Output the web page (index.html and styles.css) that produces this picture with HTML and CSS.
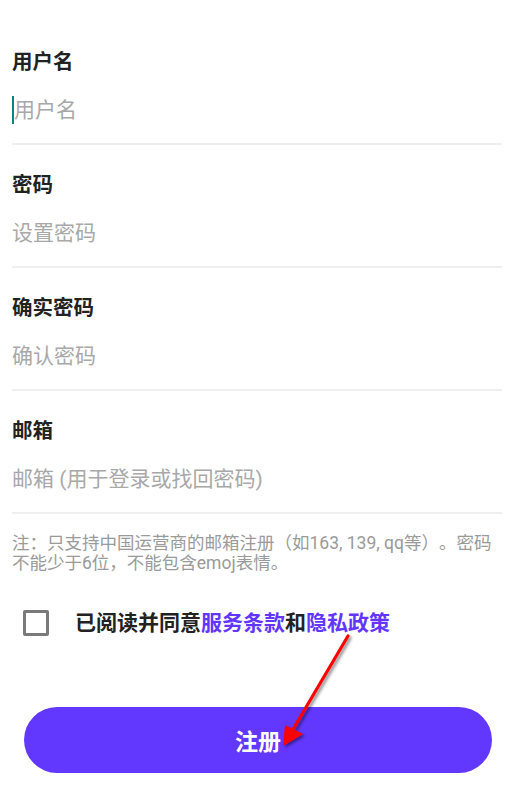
FILE: index.html
```html
<!DOCTYPE html>
<html lang="zh-CN">
<head>
    <meta charset="UTF-8">
    <meta name="viewport" content="width=device-width, initial-scale=1.0">
    <title>注册</title>
    <link rel="stylesheet" href="styles.css">
</head>
<body>
    <div class="page">
        <div class="form">
            <div class="field">
                <label class="field-label">用户名</label>
                <div class="field-input"><span class="cursor"></span><span class="placeholder">用户名</span></div>
            </div>
            <div class="field">
                <label class="field-label">密码</label>
                <div class="field-input"><span class="placeholder">设置密码</span></div>
            </div>
            <div class="field">
                <label class="field-label">确实密码</label>
                <div class="field-input"><span class="placeholder">确认密码</span></div>
            </div>
            <div class="field">
                <label class="field-label">邮箱</label>
                <div class="field-input"><span class="placeholder">邮箱 (用于登录或找回密码)</span></div>
            </div>
        </div>

        <p class="note">注：只支持中国运营商的邮箱注册（如163, 139, qq等）。密码不能少于6位，不能包含emoj表情。</p>

        <div class="agree">
            <span class="checkbox"></span>
            <span class="agree-text">已阅读并同意<a class="link">服务条款</a>和<a class="link">隐私政策</a></span>
        </div>

        <button class="submit">注册</button>
    </div>

    <!-- annotation arrow drawn over the screenshot -->
    <svg class="arrow" width="514" height="792" viewBox="0 0 514 792">
        <defs>
            <filter id="shadow" x="-20%" y="-20%" width="140%" height="140%">
                <feDropShadow dx="2" dy="2" stdDeviation="1.5" flood-color="#000" flood-opacity="0.45"/>
            </filter>
        </defs>
        <g filter="url(#shadow)">
            <line x1="348" y1="636" x2="292" y2="731" stroke="#ff0000" stroke-width="3.2" stroke-linecap="round"/>
            <polygon points="283,746 285,725 303,734" fill="#ff0000"/>
        </g>
    </svg>
</body>
</html>
```

FILE: styles.css
```css
body {
    margin: 0;
    background: #ffffff;
    font-family: Roboto, "Noto Sans CJK SC", sans-serif;
    color: #222222;
}
.page {
    width: 514px;
    height: 792px;
    position: relative;
    box-sizing: border-box;
    padding: 0 12px;
}
.form {
    padding-top: 21px;
}
.field {
    padding-top: 26px;
    border-bottom: 2px solid #efefef;
}
.field:first-child {
    padding-top: 27px;
}
.field-label {
    display: block;
    font-size: 20.5px;
    line-height: 28px;
    font-weight: bold;
    color: #222222;
}
.field-input {
    display: flex;
    align-items: center;
    margin-top: 20px;
    margin-bottom: 19px;
    height: 28px;
}
.placeholder {
    font-size: 21px;
    line-height: 28px;
    color: #a8a8a8;
}
.cursor {
    display: inline-block;
    width: 2px;
    height: 28px;
    background: #00897b;
}
.note {
    margin: 19px 0 0;
    font-size: 17.5px;
    line-height: 20px;
    color: #9a9a9a;
    text-spacing-trim: space-all;
}
.agree {
    display: flex;
    align-items: center;
    margin-top: 36px;
    padding-left: 11px;
}
.checkbox {
    width: 20px;
    height: 20px;
    border: 3px solid #7a7a7a;
    border-radius: 2px;
    flex-shrink: 0;
}
.agree-text {
    margin-left: 26px;
    font-size: 21px;
    line-height: 28px;
    font-weight: bold;
    color: #222222;
}
.link {
    color: #6236ff;
}
.submit {
    display: block;
    margin: 70px 0 0 12px;
    width: 468px;
    height: 66px;
    border: none;
    border-radius: 33px;
    background-color: #6338fe;
    color: #ffffff;
    font-family: Roboto, "Noto Sans CJK SC", sans-serif;
    font-size: 23px;
    font-weight: bold;
    cursor: pointer;
}
.arrow {
    position: absolute;
    left: 0;
    top: 0;
    pointer-events: none;
}
```
